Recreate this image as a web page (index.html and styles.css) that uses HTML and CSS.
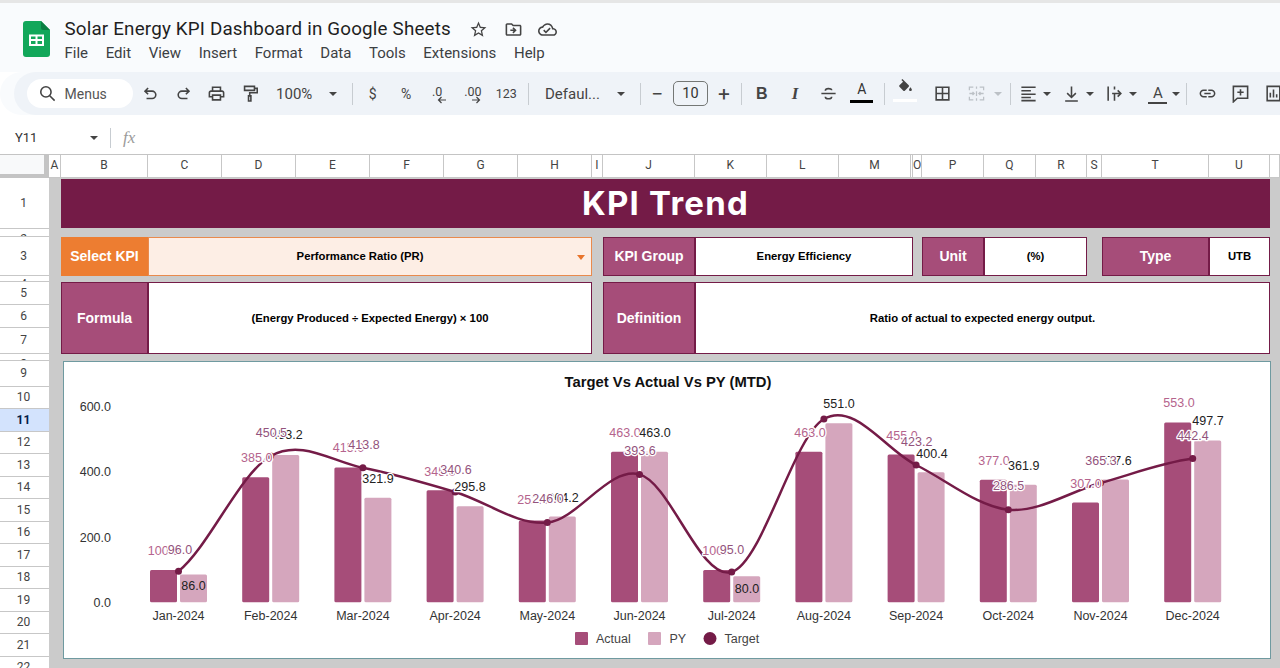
FILE: index.html
```html
<!DOCTYPE html>
<html lang="en">
<head>
<meta charset="utf-8">
<title>Solar Energy KPI Dashboard in Google Sheets</title>
<link rel="stylesheet" href="styles.css">
</head>
<body>
<div class="app">
  <div class="strip"></div>
  <header class="docbar">
    <svg class="logo" viewBox="0 0 27 36"><path d="M3 0H18L27 9V33a3 3 0 0 1-3 3H3a3 3 0 0 1-3-3V3a3 3 0 0 1 3-3z" fill="#12a75a"/><path d="M18 0L27 9H20a2 2 0 0 1-2-2z" fill="#0c7f43"/><path d="M6 13.5H21V25H6z M8 15.5V18H12.5V15.5z M14.5 15.5V18H19V15.5z M8 20V23H12.5V20z M14.5 20V23H19V20z" fill="#fff" fill-rule="evenodd"/></svg>
    <div class="docinfo">
      <div class="docline">
        <h1 class="doctitle">Solar Energy KPI Dashboard in Google Sheets</h1>
        <svg class="dicon" viewBox="0 0 24 24"><path d="M22 9.24l-7.19-.62L12 2 9.19 8.63 2 9.24l5.46 4.73L5.82 21 12 17.27 18.18 21l-1.63-7.03L22 9.24zM12 15.4l-3.76 2.27 1-4.28-3.32-2.88 4.38-.38L12 6.1l1.71 4.04 4.38.38-3.32 2.88 1 4.28L12 15.4z"/></svg>
        <svg class="dicon" viewBox="0 0 24 24"><path d="M20 6h-8l-2-2H4c-1.1 0-2 .9-2 2v12c0 1.1.9 2 2 2h16c1.1 0 2-.9 2-2V8c0-1.1-.9-2-2-2zm0 12H4V6h5.17l2 2H20v10zm-8.01-9l-1.41 1.41L12.16 12H8v2h4.16l-1.59 1.59L11.99 17 16 13.01 11.99 9z"/></svg>
        <svg class="dicon" viewBox="0 0 24 24"><path d="M19.35 10.04C18.67 6.59 15.64 4 12 4 9.11 4 6.6 5.64 5.35 8.04 2.34 8.36 0 10.91 0 14c0 3.31 2.69 6 6 6h13c2.76 0 5-2.24 5-5 0-2.64-2.05-4.78-4.65-4.96zM19 18H6c-2.21 0-4-1.79-4-4 0-2.05 1.53-3.76 3.56-3.97l1.07-.11.5-.95C8.08 7.14 9.94 6 12 6c2.62 0 4.88 1.86 5.39 4.43l.3 1.5 1.53.11c1.56.1 2.78 1.41 2.78 2.96 0 1.65-1.35 3-3 3zm-9-3.82l-2.09-2.09L6.5 13.5 10 17l6.01-6.01-1.41-1.41z"/></svg>
      </div>
      <nav class="menubar"><span>File</span><span>Edit</span><span>View</span><span>Insert</span><span>Format</span><span>Data</span><span>Tools</span><span>Extensions</span><span>Help</span></nav>
    </div>
  </header>

  <div class="toolbar">
    <div class="menus">
      <svg class="ticon" viewBox="0 0 24 24"><path class="ln" d="M10 3.5a6.5 6.5 0 1 0 0 13a6.5 6.5 0 0 0 0-13zM14.8 14.8L21 21"/></svg>
      <span>Menus</span>
    </div>
    <div class="tb"><svg class="ticon" viewBox="0 0 24 24"><path class="ln" d="M9 5L5 9L9 13M5 9H14a4.7 4.7 0 0 1 0 9.4H7"/></svg></div>
    <div class="tb"><svg class="ticon" viewBox="0 0 24 24"><path class="ln" d="M15 5L19 9L15 13M19 9H10a4.7 4.7 0 0 0 0 9.4H17"/></svg></div>
    <div class="tb"><svg class="ticon" viewBox="0 0 24 24"><path d="M19 8h-1V3H6v5H5c-1.66 0-3 1.34-3 3v6h4v4h12v-4h4v-6c0-1.66-1.34-3-3-3zM8 5h8v3H8V5zm8 12v2H8v-4h8v2zm2-2v-2H6v2H4v-4c0-.55.45-1 1-1h14c.55 0 1 .45 1 1v4h-2z"/></svg></div>
    <div class="tb"><svg class="ticon" viewBox="0 0 24 24"><path class="ln" d="M4.5 3H17V8H4.5zM17 5.5H20.5V11H11V15M9.5 15H12.5V21.5H9.5z"/></svg></div>
    <div class="tb-zoom"><span>100%</span><i class="caret"></i></div>
    <i class="sep sep-a"></i>
    <div class="tb txt">$</div>
    <div class="tb txt">%</div>
    <div class="tb txt dec dec-l"><b>.0</b><svg class="arrow" viewBox="0 0 10 8"><path class="ln" d="M9 4H2M4.5 1L1.5 4L4.5 7"/></svg></div>
    <div class="tb txt dec dec-r"><b>.00</b><svg class="arrow" viewBox="0 0 10 8"><path class="ln" d="M1 4H8M5.5 1L8.5 4L5.5 7"/></svg></div>
    <div class="tb txt small">123</div>
    <i class="sep sep-b"></i>
    <div class="tb-font"><span>Defaul...</span><i class="caret"></i></div>
    <i class="sep"></i>
    <div class="tb-step">&#8722;</div>
    <div class="sizebox">10</div>
    <div class="tb-step">+</div>
    <i class="sep sep-d"></i>
    <div class="tb fmt bold">B</div>
    <div class="tb fmt ital">I</div>
    <div class="tb"><svg class="ticon" viewBox="0 0 24 24"><path class="ln" d="M3 12H21M8 8.5C8 5 16 5 16 8M8 16C8 19.5 16 19.5 16 16"/></svg></div>
    <div class="tb colora"><span>A</span><i class="bar-black"></i></div>
    <i class="sep sep-e"></i>
    <div class="tb fillbox"><svg class="ticon" viewBox="0 0 24 24"><path d="M16.56 8.94L7.62 0 6.21 1.41l2.38 2.38-5.15 5.15c-.59.59-.59 1.54 0 2.12l5.5 5.5c.29.29.68.44 1.06.44s.77-.15 1.06-.44l5.5-5.5c.59-.58.59-1.53 0-2.12zM19 11.5s-2 2.17-2 3.5c0 1.1.9 2 2 2s2-.9 2-2c0-1.33-2-3.5-2-3.5z"/></svg><i class="bar-white"></i></div>
    <div class="tb"><svg class="ticon" viewBox="0 0 24 24"><path class="ln" d="M4 4H20V20H4zM12 4V20M4 12H20"/></svg></div>
    <div class="tb-merge"><svg class="ticon" viewBox="0 0 24 24"><path class="ln faint" d="M3 8V4H8M16 4H21V8M3 16V20H8M16 20H21V16M3 12H9M7 10L9 12L7 14M21 12H15M17 10L15 12L17 14M12 3V6M12 9V15M12 18V21"/></svg><i class="caret faint-caret"></i></div>
    <i class="sep"></i>
    <div class="tb-drop"><svg class="ticon" viewBox="0 0 24 24"><path class="ln" d="M3 4H21M3 8.5H15M3 13H21M3 17H15M3 21H21"/></svg><i class="caret"></i></div>
    <div class="tb-drop"><svg class="ticon" viewBox="0 0 24 24"><path class="ln" d="M12 3V17M6.5 11.5L12 17L17.5 11.5M4 21.5H20"/></svg><i class="caret"></i></div>
    <div class="tb-drop"><svg class="ticon" viewBox="0 0 24 24"><path class="ln" d="M4 3V21M12 3V7M12 11V21M9 12H20M16 8L20 12L16 16"/></svg><i class="caret"></i></div>
    <div class="tb-drop"><span class="rota">A</span><i class="caret"></i></div>
    <i class="sep sep-g"></i>
    <div class="tb"><svg class="ticon" viewBox="0 0 24 24"><path d="M3.9 12c0-1.71 1.39-3.1 3.1-3.1h4V7H7c-2.76 0-5 2.24-5 5s2.24 5 5 5h4v-1.9H7c-1.71 0-3.1-1.39-3.1-3.1zM8 13h8v-2H8v2zm9-6h-4v1.9h4c1.71 0 3.1 1.39 3.1 3.1s-1.39 3.1-3.1 3.1h-4V17h4c2.76 0 5-2.24 5-5s-2.24-5-5-5z"/></svg></div>
    <div class="tb"><svg class="ticon" viewBox="0 0 24 24"><path class="ln" d="M3 3H21V18H8L3 22.5zM12 6.5V14.5M8 10.5H16"/></svg></div>
    <div class="tb"><svg class="ticon" viewBox="0 0 24 24"><path class="ln" d="M4 3H20V21H4zM8 17V11M12 17V7M16 17V13"/></svg></div>
  </div>

  <div class="formulabar">
    <span class="namebox">Y11</span><i class="caret"></i><i class="sep fx-sep"></i><span class="fx">fx</span>
  </div>

  <div class="colheads">
    <div class="corner"></div>
    <div>A</div><div>B</div><div>C</div><div>D</div><div>E</div><div>F</div><div>G</div><div>H</div><div>I</div><div>J</div><div>K</div><div>L</div><div>M</div><div></div><div>O</div><div>P</div><div>Q</div><div>R</div><div>S</div><div>T</div><div>U</div><div></div>
  </div>

  <div class="body">
    <div class="rowheads">
      <div class="rh r1">1</div>
      <div class="rh r2">2</div>
      <div class="rh r3">3</div>
      <div class="rh r4">4</div>
      <div class="rh r5">5</div>
      <div class="rh">6</div>
      <div class="rh r7">7</div>
      <div class="rh r8">8</div>
      <div class="rh r9">9</div>
      <div class="rh">10</div>
      <div class="rh active">11</div>
      <div class="rh">12</div>
      <div class="rh">13</div>
      <div class="rh">14</div>
      <div class="rh">15</div>
      <div class="rh">16</div>
      <div class="rh">17</div>
      <div class="rh">18</div>
      <div class="rh">19</div>
      <div class="rh">20</div>
      <div class="rh">21</div>
      <div class="rh">22</div>
    </div>

    <main class="sheet">
      <div class="title">KPI Trend</div>

      <div class="lab orange c-sel">Select KPI</div>
      <div class="val select c-selv">Performance Ratio (PR)<i class="sel-caret"></i></div>
      <div class="lab c-grp">KPI Group</div>
      <div class="val c-grpv">Energy Efficiency</div>
      <div class="lab c-unit">Unit</div>
      <div class="val c-unitv">(%)</div>
      <div class="lab c-type">Type</div>
      <div class="val c-typev">UTB</div>

      <div class="lab tall c-sel">Formula</div>
      <div class="val tall c-selv">(Energy Produced ÷ Expected Energy) × 100</div>
      <div class="lab tall c-grp">Definition</div>
      <div class="val tall c-defv">Ratio of actual to expected energy output.</div>

      <section class="chart">
        <svg class="chart-svg" viewBox="64 362 1206 296">
          <text class="ctitle" x="668" y="387">Target Vs Actual Vs PY (MTD)</text>

          <g class="yaxis">
            <text x="111" y="411">600.0</text>
            <text x="111" y="476">400.0</text>
            <text x="111" y="541.5">200.0</text>
            <text x="111" y="607">0.0</text>
          </g>

          <g class="bars-a">
            <rect x="150" y="570" width="27" height="32.3" rx="1.5"/>
            <rect x="242.2" y="477.3" width="27" height="125" rx="1.5"/>
            <rect x="334.4" y="467.4" width="27" height="134.9" rx="1.5"/>
            <rect x="426.6" y="490.2" width="27" height="112.1" rx="1.5"/>
            <rect x="518.8" y="520.4" width="27" height="81.9" rx="1.5"/>
            <rect x="611" y="451.8" width="27" height="150.5" rx="1.5"/>
            <rect x="703.2" y="570" width="27" height="32.3" rx="1.5"/>
            <rect x="795.4" y="451.8" width="27" height="150.5" rx="1.5"/>
            <rect x="887.6" y="454.4" width="27" height="147.9" rx="1.5"/>
            <rect x="979.8" y="479.8" width="27" height="122.5" rx="1.5"/>
            <rect x="1072" y="502.5" width="27" height="99.8" rx="1.5"/>
            <rect x="1164.2" y="422.6" width="27" height="179.7" rx="1.5"/>
          </g>
          <g class="bars-p">
            <rect x="180" y="574.4" width="27" height="27.9" rx="1.5"/>
            <rect x="272.2" y="455" width="27" height="147.3" rx="1.5"/>
            <rect x="364.4" y="497.7" width="27" height="104.6" rx="1.5"/>
            <rect x="456.6" y="506.2" width="27" height="96.1" rx="1.5"/>
            <rect x="548.8" y="516.4" width="27" height="85.9" rx="1.5"/>
            <rect x="641" y="451.8" width="27" height="150.5" rx="1.5"/>
            <rect x="733.2" y="576.3" width="27" height="26" rx="1.5"/>
            <rect x="825.4" y="423.2" width="27" height="179.1" rx="1.5"/>
            <rect x="917.6" y="472.2" width="27" height="130.1" rx="1.5"/>
            <rect x="1009.8" y="484.7" width="27" height="117.6" rx="1.5"/>
            <rect x="1102" y="479.6" width="27" height="122.7" rx="1.5"/>
            <rect x="1194.2" y="440.5" width="27" height="161.8" rx="1.5"/>
          </g>

          <path class="curve" d="M178.5 571.3C209.2 546.3 240 473.25 270.7 456C301.4 438.75 332.2 461.8 362.9 467.8C393.6 473.8 424.4 482.87 455.1 492C485.8 501.13 516.6 525.53 547.3 522.6C578 519.67 608.8 466.17 639.5 474.4C670.2 482.63 701 581.23 731.7 572C762.4 562.77 793.2 436.83 823.9 419C854.6 401.17 885.4 449.88 916.1 465C946.8 480.12 977.6 506.7 1008.3 509.7C1039 512.7 1069.8 491.52 1100.5 483C1131.2 474.48 1162 462.67 1192.7 458.6"/>
          <g class="dots">
            <circle cx="178.5" cy="571.3" r="3.5"/><circle cx="270.7" cy="456" r="3.5"/><circle cx="362.9" cy="467.8" r="3.5"/><circle cx="455.1" cy="492" r="3.5"/><circle cx="547.3" cy="522.6" r="3.5"/><circle cx="639.5" cy="474.4" r="3.5"/><circle cx="731.7" cy="572" r="3.5"/><circle cx="823.9" cy="419" r="3.5"/><circle cx="916.1" cy="465" r="3.5"/><circle cx="1008.3" cy="509.7" r="3.5"/><circle cx="1100.5" cy="483" r="3.5"/><circle cx="1192.7" cy="458.6" r="3.5"/>
          </g>

          <g class="lbl lbl-a">
            <text x="163.5" y="554.5">100.0</text><text x="256.7" y="461.5">385.0</text><text x="348.5" y="451.5">415.0</text><text x="440" y="475.5">345.0</text><text x="533" y="503.5">252.0</text><text x="625" y="436.5">463.0</text><text x="718" y="554.5">100.0</text><text x="810" y="436.5">463.0</text><text x="902" y="439.5">455.0</text><text x="994" y="464.5">377.0</text><text x="1086" y="487.5">307.0</text><text x="1179" y="407">553.0</text>
          </g>
          <g class="lbl lbl-p">
            <text class="plain" x="193.5" y="590">86.0</text><text x="287" y="438.5">453.2</text><text x="378" y="482.5">321.9</text><text x="470" y="491">295.8</text><text x="563" y="501.5">264.2</text><text x="655" y="436.5">463.0</text><text class="plain" x="747" y="592.5">80.0</text><text x="839" y="408">551.0</text><text x="932" y="457.5">400.4</text><text x="1023.7" y="469.5">361.9</text><text x="1116" y="464.5">377.6</text><text x="1208" y="425">497.7</text>
          </g>
          <g class="lbl lbl-t">
            <text x="180" y="553.5">96.0</text><text x="271.4" y="437">450.5</text><text x="364" y="449">413.8</text><text x="456" y="473.5">340.6</text><text x="548" y="502.5">246.0</text><text x="640" y="455">393.6</text><text x="732" y="553.5">95.0</text><text x="916.7" y="445.5">423.2</text><text x="1008.6" y="490">286.5</text><text x="1101" y="464.5">365.3</text><text x="1193" y="440">442.4</text>
          </g>

          <g class="xaxis">
            <text x="178.5" y="620">Jan-2024</text><text x="270.7" y="620">Feb-2024</text><text x="362.9" y="620">Mar-2024</text><text x="455.1" y="620">Apr-2024</text><text x="547.3" y="620">May-2024</text><text x="639.5" y="620">Jun-2024</text><text x="731.7" y="620">Jul-2024</text><text x="823.9" y="620">Aug-2024</text><text x="916.1" y="620">Sep-2024</text><text x="1008.3" y="620">Oct-2024</text><text x="1100.5" y="620">Nov-2024</text><text x="1192.7" y="620">Dec-2024</text>
          </g>

          <g class="legend">
            <rect class="sw-a" x="575" y="632" width="13" height="13" rx="1"/><text x="596" y="642.5">Actual</text>
            <rect class="sw-p" x="648" y="632" width="13" height="13" rx="1"/><text x="669.5" y="642.5">PY</text>
            <circle class="sw-t" cx="710" cy="638.5" r="6.5"/><text x="724.5" y="642.5">Target</text>
          </g>
        </svg>
      </section>
    </main>
  </div>
</div>
</body>
</html>
```
FILE: styles.css
```css
* { box-sizing: border-box; }
html, body { margin: 0; padding: 0; height: 100%; overflow: hidden; background: #fff; }
body { font-family: "Liberation Sans", Arial, sans-serif; color: #444; }
i { display: block; font-style: normal; }

.app { width: 1280px; height: 668px; display: flex; flex-direction: column; overflow: hidden; }
.strip { height: 3px; background: #e6e6e6; flex: none; }

/* document header */
.docbar { height: 69px; flex: none; background: #f9fbfd; display: flex; padding: 17.5px 0 0 22.5px; }
.logo { width: 27px; height: 36px; flex: none; }
.docinfo { margin-left: 15px; }
.docline { display: flex; align-items: center; height: 17px; }
.doctitle { margin: 0; font: 400 18.8px/17px "Roboto", sans-serif; color: #1f1f1f; letter-spacing: .18px; white-space: nowrap; }
.dicon { width: 19px; height: 19px; fill: #444; margin-left: 15.5px; }
.doctitle + .dicon { margin-left: 18.5px; }
.menubar { display: flex; gap: 17.6px; margin-top: 6px; font: 400 15px/18px "Roboto", sans-serif; color: #3c4043; }

/* toolbar */
.toolbar { height: 43px; flex: none; margin-left: 14px; background: #eff3f8; border-radius: 22px 0 0 22px; display: flex; align-items: center; padding-left: 12.5px; box-shadow: -14px 0 0 #f9fbfd; white-space: nowrap; overflow: hidden; }
.menus { width: 106px; height: 29px; background: #fff; border-radius: 15px; display: flex; align-items: center; padding-left: 11px; gap: 8px; font: 400 14px "Roboto", sans-serif; color: #555; flex: none; }
.ticon { width: 19px; height: 19px; fill: #444; flex: none; }
.ln { fill: none; stroke: #444; stroke-width: 2; }
.ln.faint { stroke: #bcc1c6; stroke-width: 1.6; }
.tb { width: 33.4px; height: 28px; flex: none; display: flex; align-items: center; justify-content: center; position: relative; }
.menus + .tb { margin-left: 1px; }
.caret { width: 0; height: 0; border-left: 4.5px solid transparent; border-right: 4.5px solid transparent; border-top: 4.5px solid #444; flex: none; }
.faint-caret { border-top-color: #bcc1c6; }
.sep { width: 1px; height: 22px; background: #c7ccd1; flex: none; }
.tb-zoom { width: 76px; padding: 0 6px 0 9px; display: flex; align-items: center; justify-content: space-between; font: 400 15px "Roboto", sans-serif; color: #444; flex: none; }
.sep-a { margin: 0 3px 0 9px; }
.txt { font: 400 14px "Roboto", sans-serif; color: #444; }
.txt.small { font-size: 12.5px; }
.dec b { font-weight: 400; font-size: 12.5px; position: relative; top: -2px; }
.dec-l b { left: -2.5px; }
.arrow { width: 10px; height: 8px; position: absolute; left: 50%; bottom: 3.5px; }
.dec-l .arrow { margin-left: -3px; }
.dec-r .arrow { margin-left: -2px; }
.arrow .ln { stroke-width: 1.2; }
.sep-b { margin-left: 5px; }
.tb-font { width: 111px; padding: 0 15px 0 16px; display: flex; align-items: center; justify-content: space-between; font: 400 15px "Roboto", sans-serif; color: #444; flex: none; }
.tb-step { width: 32px; text-align: center; font: 400 21px "Roboto", sans-serif; color: #444; flex: none; }
.sizebox { width: 35px; height: 25px; border: 1px solid #747775; border-radius: 5px; text-align: center; font: 400 14.5px/23px "Roboto", sans-serif; color: #333; flex: none; }
.sep-d { margin: 0 3px 0 1px; }
.fmt { font-size: 16px; color: #444; }
.bold { font-weight: 700; }
.ital { font: italic 700 17px "Liberation Serif", serif; }
.colora { flex-direction: column; font: 400 14px "Roboto", sans-serif; color: #333; justify-content: flex-start; padding-top: 3px; height: 32px; }
.colora span { line-height: 16px; }
.bar-black { width: 23px; height: 3.5px; background: #000; margin-top: 3px; }
.sep-e { margin: 0 4px 0 5px; }
.fillbox { flex-direction: column; justify-content: flex-start; height: 32px; margin-right: 4px; }
.fillbox .ticon { width: 17px; height: 17px; margin-top: 1px; }
.bar-white { width: 24px; height: 3.5px; background: #fff; margin-top: 3px; }
.tb-merge { width: 51px; padding-left: 8px; display: flex; align-items: center; gap: 8px; flex: none; }
.tb-drop { width: 43px; padding-left: 8px; gap: 5px; display: flex; align-items: center; flex: none; }
.rota { width: 19px; text-align: center; font: 400 15px/18px "Roboto", sans-serif; color: #444; border-bottom: 2px solid #444; }
.sep-g { margin: 0 3px; }

/* formula bar */
.formulabar { height: 31.5px; flex: none; margin-top: 7px; background: #fff; display: flex; align-items: center; padding-left: 15px; font: 400 13px "Roboto", sans-serif; color: #333; }
.namebox { width: 75px; }
.fx-sep { margin-left: 12px; height: 20px; }
.fx { margin-left: 12px; font: italic 400 17px "Liberation Serif", serif; color: #9a9a9a; }

/* column headers share the sheet's tracks */
.colheads { height: 24.5px; flex: none; display: grid; grid-template-columns: 49px 12px 87px repeat(6, 74px) 11px 92px 71.5px 72.5px 72px 2px 9px 62px 52px 51px 15px 107px 61px 1fr; border-top: 1px solid #c4c4c4; background: #fff; font: 400 12px/21px "Roboto", sans-serif; color: #444; text-align: center; }
.colheads > div { border-right: 1px solid #c7c7c7; border-bottom: 1px solid #c7c7c7; overflow: hidden; }
.colheads > .corner { background: #f8f9fa; border-right: 5px solid #c4c4c4; border-bottom: 4px solid #c4c4c4; }

.body { flex: 1; min-height: 0; display: flex; overflow: hidden; }
.rowheads { width: 49px; flex: none; background: #fff; overflow: hidden; }
.rh { height: 22.5px; border-bottom: 1px solid #c7c7c7; display: flex; align-items: center; justify-content: center; font: 400 12px "Roboto", sans-serif; color: #444; overflow: hidden; padding-right: 2px; }
.r1 { height: 51px; }
.r2 { height: 7.5px; align-items: flex-start; padding-top: 3px; }
.r3 { height: 39.5px; }
.r4 { height: 5.5px; align-items: flex-start; padding-top: 1px; }
.r5 { height: 23.5px; }
.r7 { height: 26px; }
.r8 { height: 7.5px; align-items: flex-start; padding-top: 3px; }
.r9 { height: 25.5px; }
.rh.active { background: #d3e3fd; color: #041e49; font-weight: 700; }

/* sheet */
.sheet { flex: 1; min-width: 0; display: grid; background: #cbcbcb; grid-template-columns: 12px 87px repeat(6, 74px) 11px 92px 71.5px 72.5px 72px 2px 9px 62px 52px 51px 15px 107px 61px 1fr; grid-template-rows: 51px 7.5px 39.5px 5.5px 72.5px 7px 298px 1fr; }
.title { grid-column: 2 / 22; grid-row: 1; margin: 1px 0; background: #741b47; color: #fff; font: 700 33px/49px "Inter", sans-serif; letter-spacing: 1.2px; text-align: center; }
.lab, .val { display: flex; align-items: center; justify-content: center; border: 1px solid #741b47; grid-row: 3; }
.lab { background: #a64d79; color: #fff; font-weight: 700; font-size: 14px; }
.val { background: #fff; color: #000; font-weight: 700; font-size: 11.3px; }
.tall { grid-row: 5; }
.orange { background: #ed7d31; border-color: #ed7d31; }
.select { background: #fdeee5; border-color: #e98a4d; position: relative; padding-right: 20px; }
.sel-caret { position: absolute; right: 6px; top: 17px; width: 0; height: 0; border-left: 4px solid transparent; border-right: 4px solid transparent; border-top: 5px solid #e8742b; }
.c-sel { grid-column: 2 / 3; }
.c-selv { grid-column: 3 / 9; }
.c-grp { grid-column: 10 / 11; }
.c-grpv { grid-column: 11 / 15; }
.c-unit { grid-column: 16 / 17; }
.c-unitv { grid-column: 17 / 19; }
.c-type { grid-column: 20 / 21; }
.c-typev { grid-column: 21 / 22; }
.c-defv { grid-column: 11 / 22; }
.tall.c-selv { padding-right: 0; }

/* chart */
.chart { grid-column: 2 / 23; grid-row: 7; margin: 0 9px 0 2px; background: #fff; border: 1px solid #6f9aa0; }
.chart-svg { display: block; width: 100%; height: 100%; font-family: "Liberation Sans", Arial, sans-serif; }
.ctitle { font-size: 14.8px; font-weight: 700; fill: #111; text-anchor: middle; }
.yaxis text { font-size: 12.5px; fill: #333; text-anchor: end; }
.xaxis text { font-size: 12.5px; fill: #333; text-anchor: middle; }
.bars-a rect { fill: #a64d79; }
.bars-p rect { fill: #d5a6bd; }
.curve { fill: none; stroke: #741b47; stroke-width: 2.5; }
.dots circle { fill: #741b47; }
.lbl text { font-size: 12.5px; text-anchor: middle; paint-order: stroke; stroke: #fff; stroke-width: 2.5px; stroke-linejoin: round; }
.lbl .plain { stroke: none; }
.lbl-a text { fill: #b5648d; }
.lbl-p text { fill: #222; }
.lbl-t text { fill: #93537c; }
.legend text { font-size: 12.5px; fill: #444; }
.sw-a { fill: #a64d79; }
.sw-p { fill: #d5a6bd; }
.sw-t { fill: #741b47; }
```
